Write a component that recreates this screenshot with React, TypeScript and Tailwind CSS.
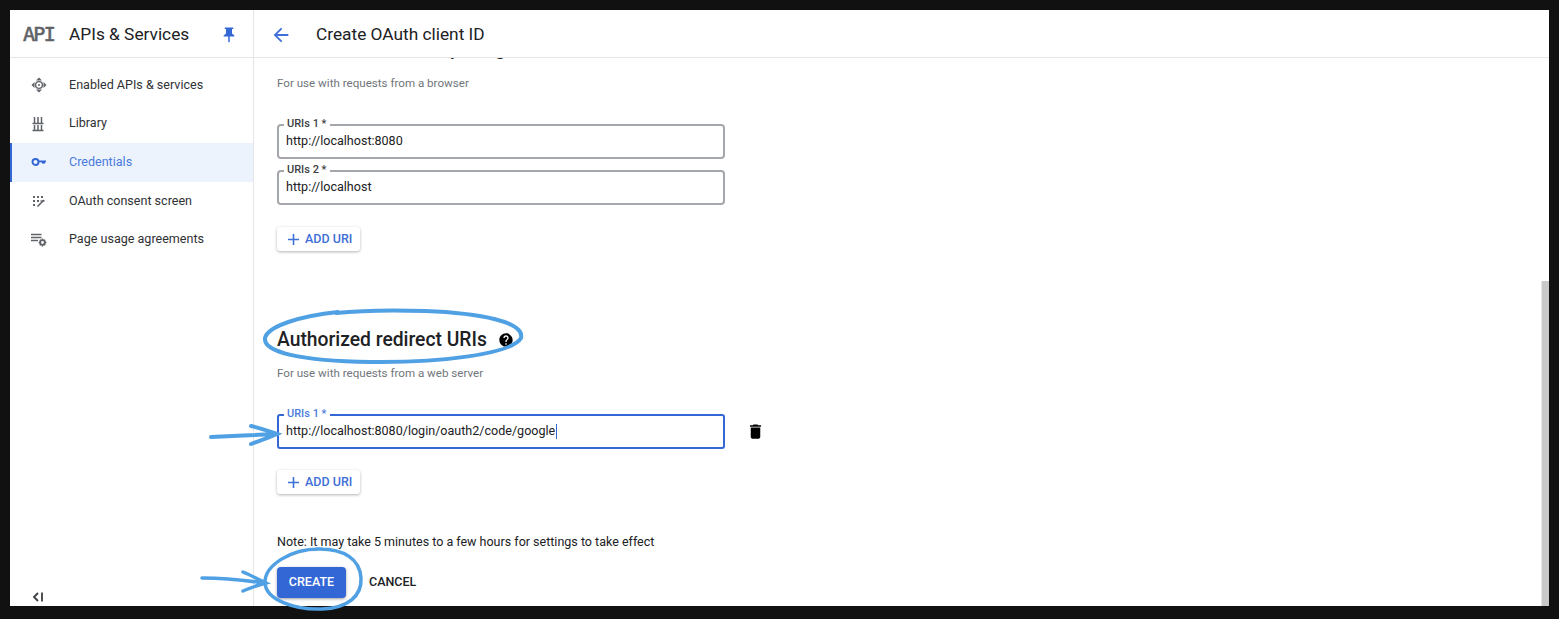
import { MdAdd, MdArrowBack, MdDelete, MdHelp, MdPushPin } from 'react-icons/md';

const roboto = { fontFamily: 'Roboto, sans-serif' };

function EnabledIcon() {
  return (
    <svg width="18" height="18" viewBox="0 0 18 18" fill="#5f6368">
      <path d="M9 1.5l3 3H6zM9 16.5l-3-3h6zM1.5 9l3-3v6zM16.5 9l-3 3V6z" />
      <circle cx="9" cy="9" r="3.4" fill="none" stroke="#5f6368" strokeWidth="1.4" />
      <circle cx="9" cy="9" r="1" />
    </svg>
  );
}

function LibraryIcon() {
  return (
    <svg width="18" height="18" viewBox="0 0 18 18" fill="none" stroke="#5f6368" strokeWidth="1.5">
      <path d="M4.5 2v6M8 2v6M11.5 2v6M4.5 10v5M8 10v5M11.5 10v5M2.5 8.6h11M2.5 15.4h11" />
    </svg>
  );
}

function KeyIcon() {
  return (
    <svg width="18" height="18" viewBox="0 0 18 18" fill="none" stroke="#3367d6">
      <circle cx="5.5" cy="9" r="3" strokeWidth="1.9" />
      <path d="M8.5 8.4h7.5" strokeWidth="1.8" />
      <path d="M11 8.4h4.5l-1 2.4h-2z" fill="#3367d6" stroke="none" />
    </svg>
  );
}

function ConsentIcon() {
  return (
    <svg width="18" height="18" viewBox="0 0 18 18" fill="#5f6368">
      <path d="M3 4h2v2H3zM7 4h2v2H7zM11 4h2v2h-2zM3 8h2v2H3zM7 8h2v2H7zM3 12h2v2H3z" />
      <path d="M7.5 14.5l6.5-6.5" fill="none" stroke="#5f6368" strokeWidth="1.6" />
      <path d="M10.5 9h4" stroke="#5f6368" strokeWidth="1.4" />
    </svg>
  );
}

function UsageIcon() {
  return (
    <svg width="18" height="18" viewBox="0 0 18 18" fill="none" stroke="#5f6368">
      <path d="M1 3.5h10.5M1 6.5h10.5M1 9.5h7" strokeWidth="1.4" />
      <circle cx="12.5" cy="11.5" r="2.3" strokeWidth="1.8" />
      <path d="M12.5 7.6v1.6M12.5 13.8v1.6M8.6 11.5h1.6M14.8 11.5h1.6M9.8 8.8l1 1M14.2 13.2l1 1M9.8 14.2l1-1M14.2 9.8l1-1" strokeWidth="1.3" />
    </svg>
  );
}

const NAV = [
  { label: 'Enabled APIs & services', icon: <EnabledIcon /> },
  { label: 'Library', icon: <LibraryIcon /> },
  { label: 'Credentials', icon: <KeyIcon />, active: true },
  { label: 'OAuth consent screen', icon: <ConsentIcon /> },
  { label: 'Page usage agreements', icon: <UsageIcon /> },
];

function Sidebar() {
  return (
    <aside className="flex w-[244px] shrink-0 flex-col border-r border-[#e4e5e7] bg-white">
      <div className="flex h-[48px] shrink-0 items-center border-b border-[#e4e5e7] pl-[13px] pr-[15px] pt-[2px]">
        <span
          className="mt-[-2px] w-[46px] text-[20px] tracking-[-1.7px] text-[#5f6368] [-webkit-text-stroke:0.6px_#5f6368]"
          style={{ fontFamily: '"DejaVu Sans Mono", monospace' }}
        >
          API
        </span>
        <span className="flex-1 text-[17.3px] text-[#202124]">APIs &amp; Services</span>
        <MdPushPin size={18} color="#3367d6" />
      </div>
      <nav className="flex flex-col pt-[8px]">
        {NAV.map((item) => (
          <div
            key={item.label}
            className={
              item.active
                ? 'flex h-[38.6px] items-center border-l-2 border-[#3367d6] bg-[#edf3fd] pl-[18px] text-[#4a7bdc]'
                : 'flex h-[38.6px] items-center pl-[20px] text-[#2f3235]'
            }
          >
            <span className="flex w-[39px] shrink-0">{item.icon}</span>
            <span className="text-[12.55px]">{item.label}</span>
          </div>
        ))}
      </nav>
      <div className="mt-auto flex h-[18px] items-center pl-[21px]">
        <svg width="14" height="14" viewBox="0 0 14 14" fill="none" stroke="#3c4043" strokeWidth="1.8">
          <path d="M7 3L3 7l4 4M11 2.5v9" />
        </svg>
      </div>
    </aside>
  );
}

function UriField({ label, value, focused }: { label: string; value: string; focused?: boolean }) {
  return (
    <div
      className={
        focused
          ? 'relative flex h-[35px] w-[448px] items-center rounded-[3px] border-2 border-[#3367d6] pl-[7px]'
          : 'relative flex h-[35px] w-[448px] items-center rounded-[4px] border-2 border-[#a4a7ab] pl-[7px]'
      }
    >
      <span
        className={
          focused
            ? 'absolute left-[5px] top-[-9px] bg-white px-[3px] text-[11px] font-medium leading-[14px] text-[#4a7bdc]'
            : 'absolute left-[5px] top-[-9px] bg-white px-[3px] text-[11px] font-medium leading-[14px] text-[#3c4043]'
        }
      >
        {label}
      </span>
      <span className="text-[12.55px] text-[#202124]">{value}</span>
      {focused && <span className="ml-px h-[15px] w-px bg-[#3367d6]" />}
    </div>
  );
}

function AddUri() {
  return (
    <button className="flex h-[24px] w-[83px] items-center gap-[2px] rounded-[3px] bg-white pl-[7px] text-[12.5px] font-medium text-[#3f6fd8] shadow-[0_1px_3px_rgba(60,64,67,0.4)]">
      <MdAdd size={19} />
      ADD URI
    </button>
  );
}

function Annotations() {
  return (
    <svg className="pointer-events-none absolute left-0 top-0" width="1559" height="619" fill="none" stroke="#50a0e4" strokeLinecap="round">
      <path d="M338 312C300 316 268 326 265 338C263 352 300 361 370 362C440 363 512 354 521 338C525 322 480 313 425 311C395 310 365 310 336 313" strokeWidth="4" />
      <path d="M211 437C232 436 255 435 276 434M251 426C260 428 268 431 277 434C268 438 259 441 251 444" strokeWidth="4" />
      <path d="M202 578C222 578 244 580 264 583M243 572C250 575 258 579 266 583C258 585 250 588 243 591" strokeWidth="3.5" />
      <path d="M322 549C290 548 265 566 265 582C265 600 295 610 322 609C348 608 362 596 361 578C360 560 345 548 316 549" strokeWidth="3.5" />
    </svg>
  );
}

export default function App() {
  return (
    <div className="relative h-[619px] w-[1559px] overflow-hidden bg-[#111111] pb-[13px] pl-[10px] pr-[10px] pt-[10px]" style={roboto}>
      <div className="flex h-full bg-white">
        <Sidebar />
        <div className="flex min-w-0 flex-1 flex-col">
          <header className="z-10 flex h-[48px] shrink-0 items-center border-b border-[#e4e5e7] bg-white pl-[16px] pt-[2px]">
            <MdArrowBack size={22} color="#3f6fd8" />
            <h1 className="ml-[24px] text-[17.3px] text-[#202124]">Create OAuth client ID</h1>
          </header>
          <div className="relative flex min-h-0 flex-1 overflow-hidden">
            <main className="flex flex-col pl-[23px]">
              <h2 className="mt-[-23px] h-[28px] text-[19.3px] font-medium leading-[28px] text-[#202124]">
                Authorized JavaScript origins
              </h2>
              <p className="mt-[12px] text-[11.6px] leading-[16px] text-[#70757a]">For use with requests from a browser</p>
              <div className="mt-[33px] flex flex-col gap-[11px]">
                <UriField label="URIs 1 *" value="http://localhost:8080" />
                <UriField label="URIs 2 *" value="http://localhost" />
              </div>
              <div className="mt-[22px]">
                <AddUri />
              </div>
              <div className="mt-[75px] flex items-center gap-[11px]">
                <h2 className="text-[19.3px] font-medium leading-[28px] text-[#202124]">Authorized redirect URIs</h2>
                <MdHelp size={16} color="#000000" />
              </div>
              <p className="mt-[11px] text-[11.6px] leading-[16px] text-[#70757a]">For use with requests from a web server</p>
              <div className="mt-[33px] flex items-center gap-[21px]">
                <UriField label="URIs 1 *" value="http://localhost:8080/login/oauth2/code/google" focused />
                <MdDelete size={19} color="#000000" />
              </div>
              <div className="mt-[21px]">
                <AddUri />
              </div>
              <p className="mt-[40px] text-[12.5px] leading-[16px] text-[#202124]">
                Note: It may take 5 minutes to a few hours for settings to take effect
              </p>
              <div className="mt-[17px] flex items-center gap-[23px]">
                <button className="h-[31px] w-[69px] rounded-[4px] bg-[#3367d6] text-[12.5px] font-medium text-white shadow-[0_1px_3px_rgba(60,64,67,0.5)]">
                  CREATE
                </button>
                <button className="text-[12.5px] font-medium text-[#202124]">CANCEL</button>
              </div>
            </main>
            <div className="ml-auto flex w-[8px] flex-col">
              <div className="mt-[223px] flex-1 border-l border-[#e4e5e7] bg-[#c8c8c8]" />
            </div>
          </div>
        </div>
      </div>
      <Annotations />
    </div>
  );
}
